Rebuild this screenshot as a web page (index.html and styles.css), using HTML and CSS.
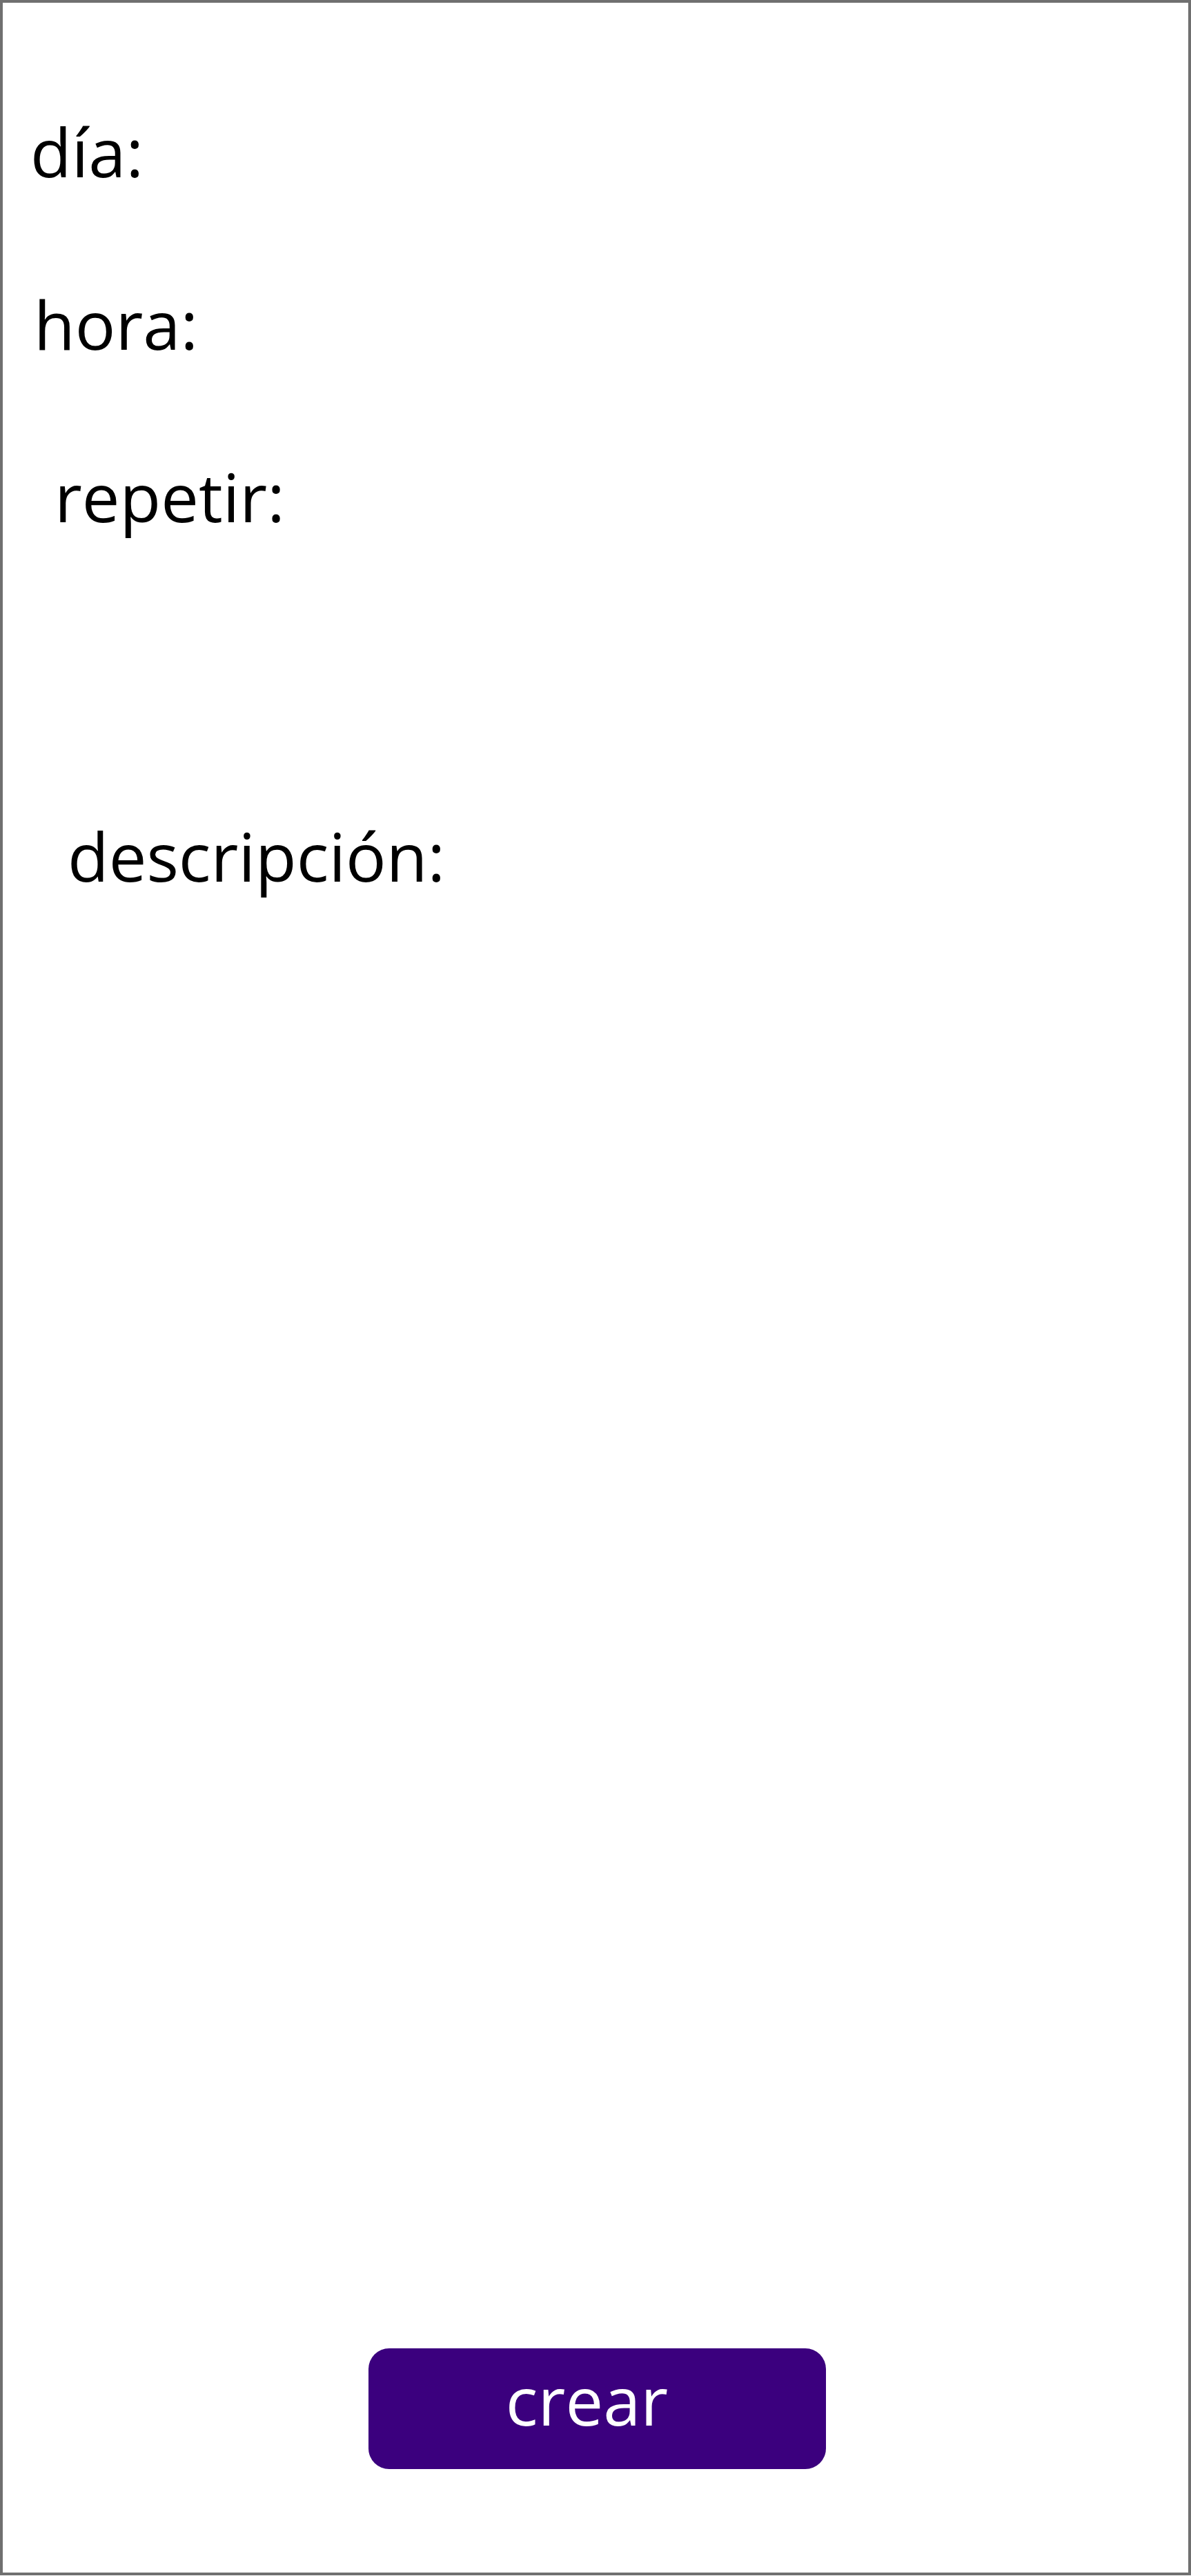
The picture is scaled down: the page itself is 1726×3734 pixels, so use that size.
FILE: index.html
```html
<!DOCTYPE html>
<html lang="es">
<head>
<meta charset="utf-8">
<title>crear</title>
<link rel="stylesheet" href="styles.css">
</head>
<body>
<main class="frame">
  <div class="label label-dia">día:</div>
  <div class="label label-hora">hora:</div>
  <div class="label label-repetir">repetir:</div>
  <div class="label label-desc">descripción:</div>
  <button class="btn-crear" type="button">crear</button>
</main>
</body>
</html>
```

FILE: styles.css
```css
html, body {
  margin: 0;
  padding: 0;
  background: #ffffff;
}

.frame {
  box-sizing: border-box;
  width: 1726px;
  height: 3733px;
  border: 4px solid #707070;
  background: #ffffff;
  display: flex;
  flex-direction: column;
  align-items: flex-start;
  font-family: "Open Sans", "Noto Sans", sans-serif;
}

.label {
  font-size: 97.5px;
  line-height: 100px;
  height: 100px;
  color: #000000;
  white-space: nowrap;
}

.label-dia {
  margin-top: 166px;
  margin-left: 40px;
}

.label-hora {
  margin-top: 150px;
  margin-left: 45px;
}

.label-repetir {
  margin-top: 150px;
  margin-left: 75px;
}

.label-desc {
  margin-top: 421px;
  margin-left: 94px;
}

.btn-crear {
  margin-top: auto;
  margin-bottom: 150px;
  margin-left: 530px;
  box-sizing: border-box;
  width: 663px;
  height: 175px;
  padding: 0 30px 26px 0;
  border: none;
  border-radius: 30px;
  background: #3b007e;
  color: #ffffff;
  font-family: "Open Sans", "Noto Sans", sans-serif;
  font-size: 97.5px;
  line-height: 100px;
  display: flex;
  align-items: center;
  justify-content: center;
  cursor: pointer;
}
```
